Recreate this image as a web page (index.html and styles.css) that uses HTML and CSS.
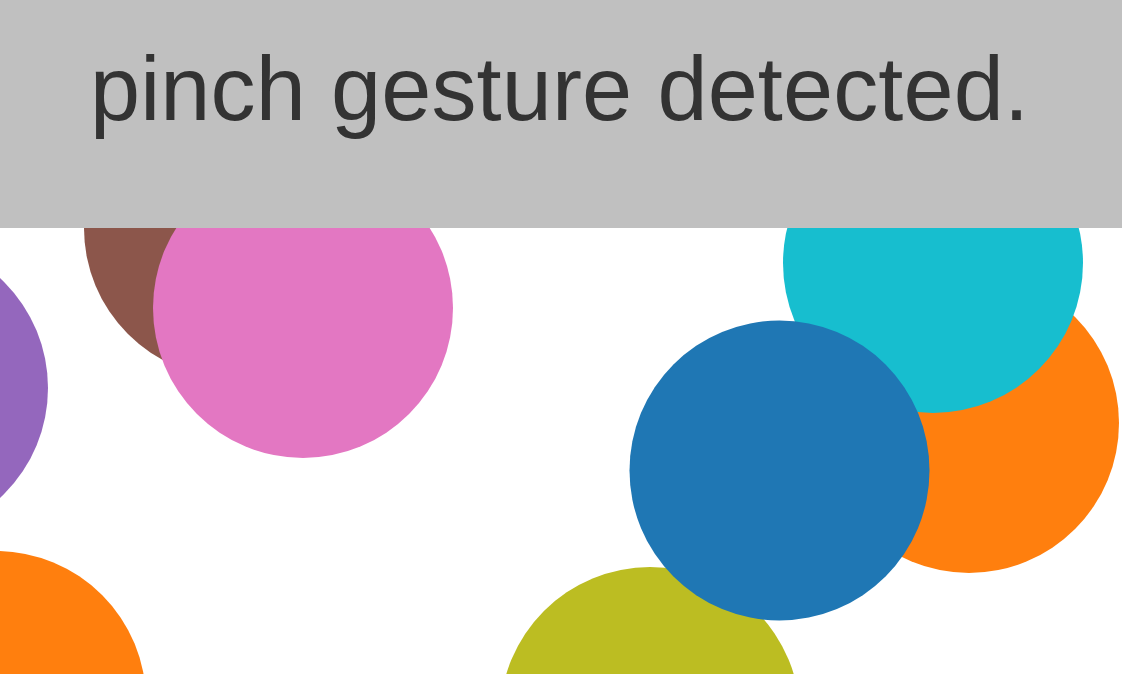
FILE: index.html
```html
<!DOCTYPE html>
<html>
<head>
<meta charset="utf-8">
<link rel="stylesheet" href="styles.css">
</head>
<body>
<svg class="stage" width="1122" height="674" viewBox="0 0 1122 674">
  <circle cx="-102" cy="388" r="150" fill="#9467bd"/>
  <circle cx="-4" cy="701" r="150" fill="#ff7f0e"/>
  <circle cx="234" cy="228" r="150" fill="#8c564b"/>
  <circle cx="303" cy="308" r="150" fill="#e377c2"/>
  <circle cx="650" cy="717" r="150" fill="#bcbd22"/>
  <circle cx="969" cy="423" r="150" fill="#ff7f0e"/>
  <circle cx="933" cy="263" r="150" fill="#17becf"/>
  <circle cx="779.5" cy="470.5" r="150" fill="#1f77b4"/>
</svg>
<div class="banner">pinch gesture detected.</div>
</body>
</html>
```
FILE: styles.css
```css
html, body {
  margin: 0;
  padding: 0;
  width: 1122px;
  height: 674px;
  overflow: hidden;
  background: #ffffff;
}
body {
  position: relative;
  font-family: "Liberation Sans", Arial, sans-serif;
}
.stage {
  position: absolute;
  left: 0;
  top: 0;
  display: block;
}
.banner {
  position: relative;
  box-sizing: border-box;
  height: 228px;
  padding: 44px 0 0 90px;
  background: #c0c0c0;
  color: #333333;
  font-size: 90px;
  line-height: 90px;
  letter-spacing: 0.15px;
  white-space: nowrap;
}
```
